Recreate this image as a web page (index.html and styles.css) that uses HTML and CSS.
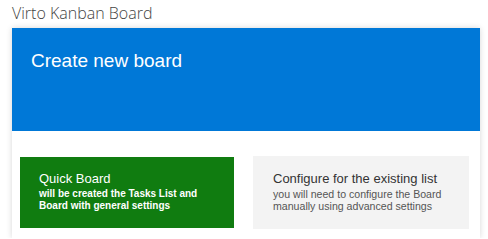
FILE: index.html
```html
<!DOCTYPE html>
<html lang="en">
<head>
	<meta charset="UTF-8">
	<title>Virto Kanban Board</title>
	<link rel="stylesheet" href="styles.css">
</head>
<body>
	<div class="title">Virto Kanban Board</div>
	<div class="card">
		<div class="card-head">Create new board</div>
		<div class="card-body">
			<div class="option quick">
				<div class="option-name">Quick Board</div>
				<div class="option-desc">will be created the Tasks List and Board with general settings</div>
			</div>
			<div class="option existing">
				<div class="option-name">Configure for the existing list</div>
				<div class="option-desc">you will need to configure the Board manually using advanced settings</div>
			</div>
		</div>
	</div>
</body>
</html>
```

FILE: styles.css
```css
body {
	margin: 0;
	font-family: "Liberation Sans", Arial, sans-serif;
	background: #fff;
}
.title {
	font-family: "Open Sans", "Noto Sans", sans-serif;
	font-weight: 300;
	font-size: 16px;
	color: #444;
	height: 28px;
	line-height: 26px;
	padding-left: 12px;
}
.card {
	width: 468px;
	height: 210px;
	margin-left: 12px;
	box-shadow: 0 0 6px rgba(0, 0, 0, 0.16);
}
.card-head {
	background: #0078d7;
	color: #fff;
	font-size: 19px;
	height: 103px;
	padding: 22px 0 0 19px;
	box-sizing: border-box;
}
.card-body {
	display: flex;
	align-items: center;
	gap: 19px;
	padding: 25px 0 0 8px;
}
.option {
	box-sizing: border-box;
	padding: 14px 19px 0 19px;
}
.quick {
	width: 214px;
	height: 71px;
	background: #107c10;
	color: #fff;
}
.existing {
	width: 216px;
	height: 73px;
	background: #f3f3f3;
	color: #333;
	padding-left: 20px;
	padding-top: 15px;
}
.option-name {
	font-size: 13px;
	line-height: 15px;
}
.option-desc {
	font-size: 10.6px;
	line-height: 12px;
	margin-top: 2px;
}
.quick .option-desc {
	font-size: 10px;
	font-weight: bold;
}
.existing .option-desc {
	color: #555;
}
```
